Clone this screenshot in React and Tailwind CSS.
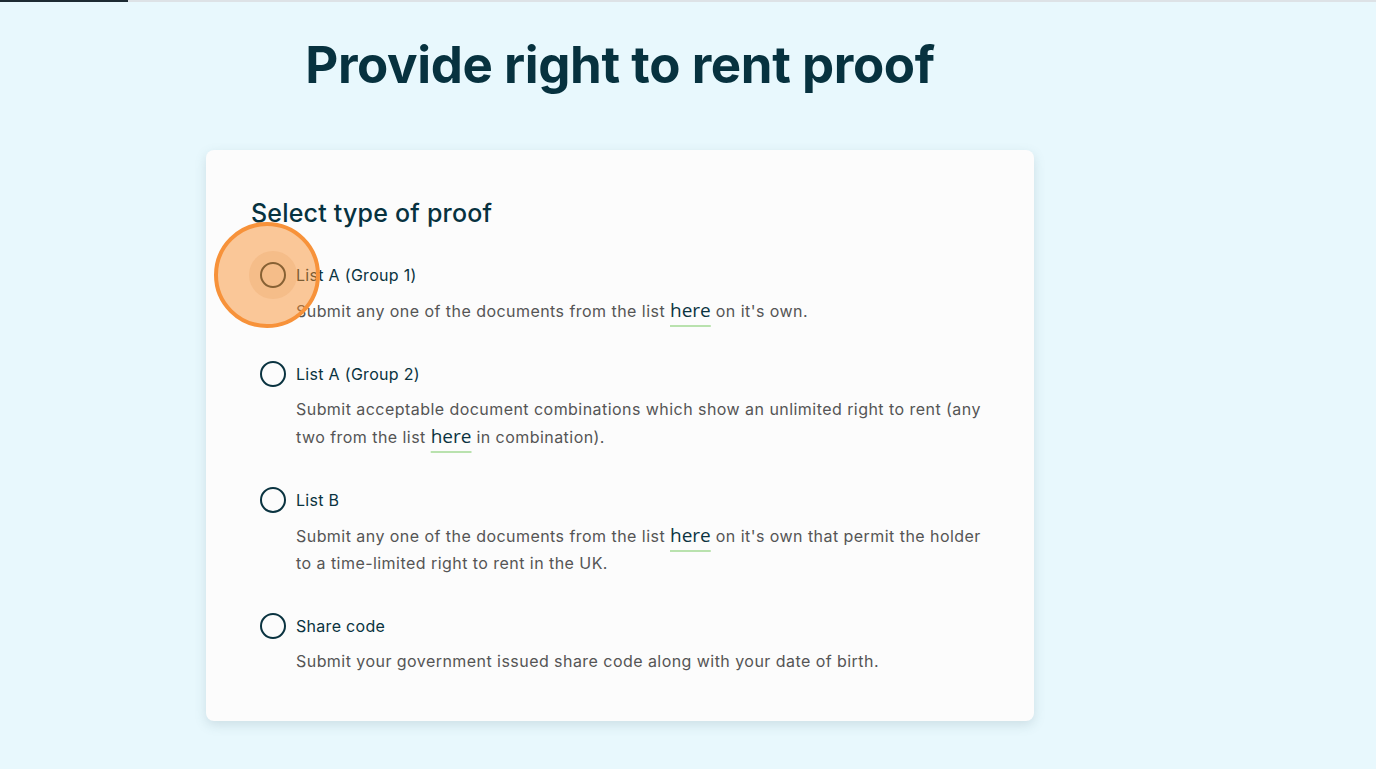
import React from "react";

const options = [
  {
    label: "List A (Group 1)",
    before: "Submit any one of the documents from the list ",
    after: " on it's own.",
  },
  {
    label: "List A (Group 2)",
    before:
      "Submit acceptable document combinations which show an unlimited right to rent (any two from the list ",
    after: " in combination).",
  },
  {
    label: "List B",
    before: "Submit any one of the documents from the list ",
    after: " on it's own that permit the holder to a time-limited right to rent in the UK.",
  },
  {
    label: "Share code",
    before: "Submit your government issued share code along with your date of birth.",
    after: null,
  },
];

const HereLink = () => (
  <a
    href="#"
    className="text-[19px] tracking-normal text-[#0a3340] underline decoration-[#b9e2ae] decoration-2 underline-offset-[8px] font-['Open_Sans',sans-serif]"
  >
    here
  </a>
);

const Option = ({ opt, first }) => (
  <div className="relative">
    <label className="flex items-center gap-[10px] h-[26px] cursor-pointer">
      <span className="w-[26px] h-[26px] rounded-full border-2 border-[#0a3340] shrink-0" />
      <span className="text-[16px] text-[#0a3340] tracking-[0.3px]">{opt.label}</span>
    </label>
    <p className="ml-[36px] mt-[9px] w-[696px] text-[16px] leading-[27px] text-[#555555] tracking-[0.45px]">
      {opt.before}
      {opt.after !== null && <HereLink />}
      {opt.after}
    </p>
    {first && (
      // click highlight drawn over the first radio
      <div className="absolute left-[-46px] top-[-40px] w-[106px] h-[106px] rounded-full bg-[rgba(249,140,40,0.47)] border-4 border-[#f7923a] pointer-events-none">
        <div className="absolute left-[31px] top-[25px] w-[48px] h-[48px] rounded-full bg-[rgba(220,130,50,0.14)]" />
      </div>
    )}
  </div>
);

export default function App() {
  return (
    <div className="min-h-screen bg-[#e8f8fd] font-['Inter',sans-serif]">
      <div className="flex h-[2px]">
        <div className="w-[128px] bg-[#1d2b33]" />
        <div className="flex-1 bg-[#dde2e6]" />
      </div>
      <div className="w-[828px] ml-[206px]">
        <h1 className="text-center text-[51px] leading-[60px] font-bold text-[#07323f] mt-[33px] tracking-[-0.4px]">
          Provide right to rent proof
        </h1>
        <div className="mt-[55px] bg-[#fcfcfc] rounded-[8px] shadow-[0_4px_12px_rgba(80,110,120,0.18)] pl-[45px] pr-[40px] pt-[48px] pb-[46px]">
          <h2 className="text-[25px] leading-[30px] font-medium text-[#07323f] tracking-[0.2px]">Select type of proof</h2>
          <div className="ml-[9px] mt-[34px] flex flex-col gap-[36px]">
            {options.map((opt, i) => (
              <Option key={opt.label} opt={opt} first={i === 0} />
            ))}
          </div>
        </div>
      </div>
    </div>
  );
}
